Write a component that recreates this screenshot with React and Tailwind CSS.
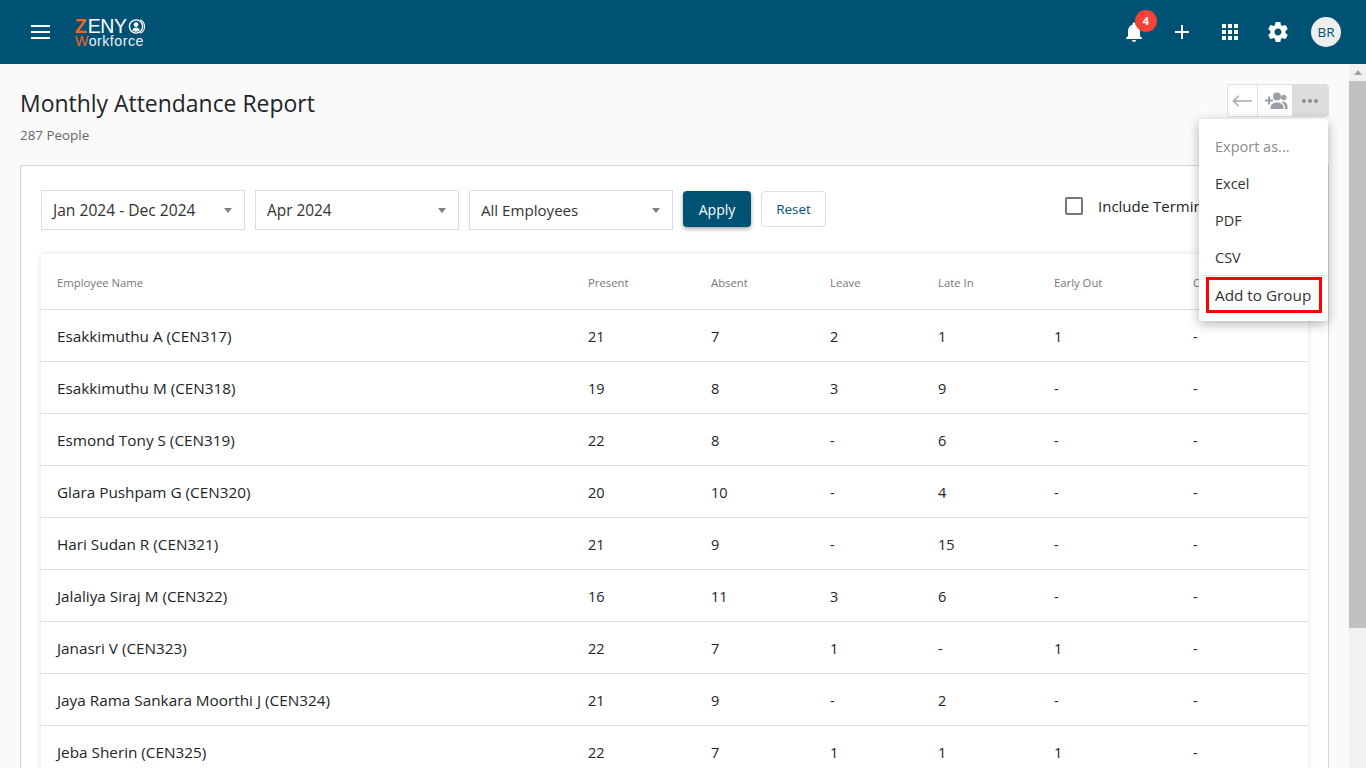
import React from "react";

const rows = [
  ["Esakkimuthu A (CEN317)", "21", "7", "2", "1", "1", "-"],
  ["Esakkimuthu M (CEN318)", "19", "8", "3", "9", "-", "-"],
  ["Esmond Tony S (CEN319)", "22", "8", "-", "6", "-", "-"],
  ["Glara Pushpam G (CEN320)", "20", "10", "-", "4", "-", "-"],
  ["Hari Sudan R (CEN321)", "21", "9", "-", "15", "-", "-"],
  ["Jalaliya Siraj M (CEN322)", "16", "11", "3", "6", "-", "-"],
  ["Janasri V (CEN323)", "22", "7", "1", "-", "1", "-"],
  ["Jaya Rama Sankara Moorthi J (CEN324)", "21", "9", "-", "2", "-", "-"],
  ["Jeba Sherin (CEN325)", "22", "7", "1", "1", "1", "-"],
];

const grid = "grid grid-cols-[531px_123px_119px_108px_116px_139px_1fr] pl-4";

function Select({ label, size }) {
  return (
    <div className="w-[204px] h-10 border border-[#dddddd] bg-white flex items-center justify-between pl-[11px] pr-[12px] text-[#333333]">
      <span className={size}>{label}</span>
      <span className="w-0 h-0 border-x-[4.5px] border-x-transparent border-t-[5px] border-t-[#808080]" />
    </div>
  );
}

function Logo() {
  return (
    <div className="w-[72px] h-[30px] flex flex-col font-['Liberation_Sans',sans-serif] text-white">
      <div className="flex items-center h-[17px] mt-[1px] text-[19.500px] leading-[17px] tracking-[-0.3px] whitespace-nowrap">
        <span className="text-[#f26522] font-bold mr-[1px]">Z</span>
        <span>ENY</span>
        <svg viewBox="0 0 18 18" className="w-[18px] h-[17px] shrink-0 ml-[1px]" fill="none">
          <circle cx="8" cy="9" r="7" stroke="white" strokeWidth="1.500" />
          <path d="M12.500 1.800a8 8 0 0 1 0 14.400" stroke="white" strokeWidth="1.100" />
          <circle cx="8" cy="7" r="2.500" fill="white" />
          <path d="M4 13c.6-2 2.200-3 4-3s3.400 1 4 3a6 6 0 0 1-4 1.500A6 6 0 0 1 4 13z" fill="white" />
        </svg>
      </div>
      <div className="h-[13px] mt-[0px] text-[14.200px] leading-[13px] tracking-[0.5px] text-[#eaf2f5] whitespace-nowrap">
        <span className="text-[#f26522]">W</span>orkforce
      </div>
    </div>
  );
}

export default function App() {
  return (
    <div className="h-screen overflow-hidden flex flex-col bg-[#fafafa] font-['Open_Sans','Noto_Sans',sans-serif] text-[#212529]">
      <header className="h-16 shrink-0 bg-[#005274] flex items-center text-white">
        <button className="ml-[31px] w-[19px] flex flex-col gap-[4px]">
          <span className="h-[2px] bg-white" />
          <span className="h-[2px] bg-white" />
          <span className="h-[2px] bg-white" />
        </button>
        <div className="ml-[25px]"><Logo /></div>
        <div className="ml-auto flex items-center mr-[25px]">
          <div className="relative w-6 h-6 mr-[24px]">
            <svg viewBox="0 0 24 24" className="w-6 h-6" fill="white">
              <path d="M12 22c1.100 0 2-.9 2-2h-4c0 1.100.9 2 2 2zm6-6v-5c0-3.070-1.630-5.640-4.500-6.320V4c0-.83-.67-1.500-1.500-1.500s-1.500.67-1.500 1.500v.68C7.640 5.360 6 7.920 6 11v5l-2 2v1h16v-1l-2-2z" />
            </svg>
            <span className="absolute left-[13px] -top-[10px] w-[22px] h-[22px] rounded-full bg-[#f44336] text-white text-[11px] font-bold flex items-center justify-center">4</span>
          </div>
          <svg viewBox="0 0 24 24" className="w-6 h-6 mr-[24px]" fill="white"><path d="M19 13h-6v6h-2v-6H5v-2h6V5h2v6h6v2z" /></svg>
          <svg viewBox="0 0 24 24" className="w-6 h-6 mr-[24px]" fill="white"><path d="M4 8h4V4H4v4zm6 12h4v-4h-4v4zm-6 0h4v-4H4v4zm0-6h4v-4H4v4zm6 0h4v-4h-4v4zm6-10v4h4V4h-4zm-6 4h4V4h-4v4zm6 6h4v-4h-4v4zm0 6h4v-4h-4v4z" /></svg>
          <svg viewBox="0 0 24 24" className="w-6 h-6 mr-[21px]" fill="white"><path d="M19.430 12.980c.04-.32.07-.64.07-.98s-.03-.66-.07-.98l2.110-1.650c.19-.15.24-.42.12-.64l-2-3.460c-.12-.22-.39-.3-.61-.22l-2.490 1c-.52-.4-1.080-.73-1.690-.98l-.38-2.650C14.460 2.180 14.250 2 14 2h-4c-.25 0-.46.18-.49.42l-.38 2.650c-.61.25-1.170.59-1.690.98l-2.490-1c-.23-.09-.49 0-.61.22l-2 3.460c-.13.22-.07.49.12.64l2.110 1.650c-.04.32-.07.65-.07.98s.03.66.07.98l-2.110 1.650c-.19.15-.24.42-.12.64l2 3.460c.12.22.39.3.61.22l2.490-1c.52.4 1.080.73 1.690.98l.38 2.650c.03.24.24.42.49.42h4c.25 0 .46-.18.49-.42l.38-2.650c.61-.25 1.170-.59 1.690-.98l2.490 1c.23.09.49 0 .61-.22l2-3.460c.12-.22.07-.49-.12-.64l-2.110-1.650zM12 15.500c-1.930 0-3.500-1.570-3.500-3.500s1.570-3.500 3.500-3.500 3.500 1.570 3.500 3.500-1.570 3.500-3.500 3.500z" /></svg>
          <div className="w-[30px] h-[30px] rounded-full bg-[#eeeeee] text-[#005274] text-[13.500px] flex items-center justify-center">BR</div>
        </div>
      </header>

      <div className="flex-1 min-h-0 flex">
        <main className="relative flex-1 min-w-0 overflow-hidden px-5">
          <div className="flex items-start justify-between pt-5">
            <div>
              <h1 className="text-[22.950px] leading-[39px] text-[#212529]">Monthly Attendance Report</h1>
              <p className="text-[13.400px] leading-[20px] mt-[2px] text-[#666666]">287 People</p>
            </div>
            <div className="flex h-[33px] border border-[#dddddd] rounded-[3px] overflow-hidden bg-white">
              <button className="w-[30px] flex items-center justify-center border-r border-[#dddddd]">
                <svg viewBox="0 0 22 14" className="w-[21px] h-[14px]" fill="none" stroke="#a3a8ad" strokeWidth="1.500"><path d="M1 7h20M7 1.500 1.500 7 7 12.500" /></svg>
              </button>
              <button className="w-[34px] flex items-center justify-center">
                <svg viewBox="0 0 26 18" className="w-[26px] h-[18px]" fill="#9aa0a6">
                  <path d="M3 7.500h3v-3h2v3h3v2H8v3H6v-3H3z" />
                  <circle cx="15" cy="4.500" r="4" />
                  <path d="M8.500 17v-1.500c0-3 2.800-5 6.500-5s6.500 2 6.500 5V17z" />
                  <circle cx="21.800" cy="5.500" r="2.700" />
                  <path d="M20 9.500c3.300 0 5.500 1.800 5.500 4.500v3h-2.600v-1.500c0-2.300-1.100-4.200-3.300-5.300z" />
                </svg>
              </button>
              <button className="w-[36px] bg-[#dddddd] flex items-center justify-center gap-[2px]">
                <span className="w-[4px] h-[4px] rounded-full bg-[#8a8f94]" />
                <span className="w-[4px] h-[4px] rounded-full bg-[#8a8f94]" />
                <span className="w-[4px] h-[4px] rounded-full bg-[#8a8f94]" />
              </button>
            </div>
          </div>

          <section className="mt-[20px] border border-[#d4d4d4] bg-white px-5 pt-6">
            <div className="flex items-start gap-[10px] h-[64px]">
              <Select label="Jan 2024 - Dec 2024" size="text-[15.600px] mt-[2px]" />
              <Select label="Apr 2024" size="text-[15.400px] mt-[2px]" />
              <Select label="All Employees" size="text-[15.100px]" />
              <button className="w-[68px] h-9 mt-[1px] rounded-[4px] bg-[#005274] text-white text-[14px] shadow-[0_2px_4px_rgba(0,0,0,0.35)]">Apply</button>
              <button className="w-[65px] h-9 mt-[1px] rounded-[4px] border border-[#dddddd] bg-white text-[#005274] text-[13.500px]">Reset</button>
              <label className="ml-[229px] flex items-center whitespace-nowrap text-[15px] mt-[5px]">
                <span className="w-[18px] h-[18px] border-2 border-[#757575] rounded-[2px] mr-[15px]" />
                Include Terminated
              </label>
            </div>
            <div className="shadow-[0_0_6px_rgba(0,0,0,0.12)] bg-white">
              <div className={`${grid} h-[56px] items-center border-b border-[#dddddd] pt-[3px] text-[11.300px] text-[#777777]`}>
                <span>Employee Name</span>
                <span>Present</span>
                <span>Absent</span>
                <span>Leave</span>
                <span>Late In</span>
                <span>Early Out</span>
                <span>On Duty</span>
              </div>
              {rows.map((r) => (
                <div key={r[0]} className={`${grid} h-[52px] items-center border-b border-[#dddddd] pt-[2px] text-[14.500px] text-[#212529]`}>
                  {r.map((c, i) => (
                    <span key={i} className={i === 0 ? "text-[15.300px]" : ""}>{c}</span>
                  ))}
                </div>
              ))}
            </div>
          </section>

          <div className="absolute left-[1199px] top-[55px] w-[129px] h-[202px] rounded-[4px] bg-white shadow-[0_3px_12px_rgba(0,0,0,0.3)] flex flex-col pt-[9px] text-[14.500px] text-[#333333]">
            <div className="h-[37px] pl-4 flex items-center text-[#8a8a8a]">Export as...</div>
            <div className="h-[37px] pl-4 flex items-center">Excel</div>
            <div className="h-[37px] pl-4 flex items-center">PDF</div>
            <div className="h-[36px] pl-4 pt-[2px] flex items-center">CSV</div>
            <div className="mx-[3px] border-t border-[#dddddd]" />
            <div className="ml-[7px] mr-[6px] mt-[1px] h-[36px] border-[3px] border-[#ff0000] pl-[6px] flex items-center whitespace-nowrap text-[15.300px]">Add to Group</div>
          </div>
        </main>

        <aside className="w-[17px] shrink-0 bg-[#f1f1f1] flex flex-col">
          <div className="h-[17px] flex items-center justify-center">
            <span className="w-0 h-0 border-x-[4px] border-x-transparent border-b-[5px] border-b-[#a3a3a3]" />
          </div>
          <div className="h-[547px] bg-[#c1c1c1]" />
        </aside>
      </div>
    </div>
  );
}
